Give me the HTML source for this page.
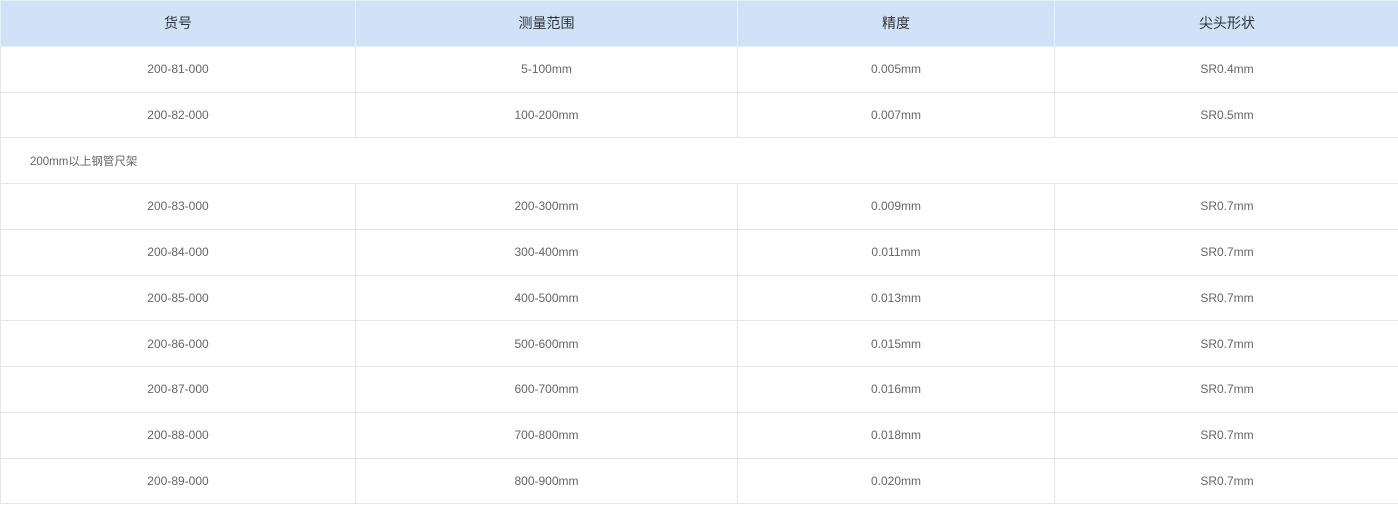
<!DOCTYPE html>
<html><head><meta charset="utf-8"><style>
html,body{margin:0;padding:0;background:#fff;width:1398px;height:505px;overflow:hidden}
table{border-collapse:collapse;table-layout:fixed;width:1399px;font-family:"Liberation Sans","Noto Sans CJK SC",sans-serif;}
td,th{border:1px solid #e6e6e6;text-align:center;height:44.75px;padding:0;font-size:12px;color:#666;font-weight:normal}
th{background:#cfe2f8;font-size:14px;color:#333;border-color:#e9eef5}
td.l{text-align:left;padding-left:29px;font-size:11.5px}
</style></head><body>
<table>
<colgroup><col style="width:355px"><col style="width:382px"><col style="width:317px"><col style="width:345px"></colgroup>
<tr><th>货号</th><th>测量范围</th><th>精度</th><th>尖头形状</th></tr>
<tr><td>200-81-000</td><td>5-100mm</td><td>0.005mm</td><td>SR0.4mm</td></tr>
<tr><td>200-82-000</td><td>100-200mm</td><td>0.007mm</td><td>SR0.5mm</td></tr>
<tr><td colspan="4" class="l">200mm以上钢管尺架</td></tr>
<tr><td>200-83-000</td><td>200-300mm</td><td>0.009mm</td><td>SR0.7mm</td></tr>
<tr><td>200-84-000</td><td>300-400mm</td><td>0.011mm</td><td>SR0.7mm</td></tr>
<tr><td>200-85-000</td><td>400-500mm</td><td>0.013mm</td><td>SR0.7mm</td></tr>
<tr><td>200-86-000</td><td>500-600mm</td><td>0.015mm</td><td>SR0.7mm</td></tr>
<tr><td>200-87-000</td><td>600-700mm</td><td>0.016mm</td><td>SR0.7mm</td></tr>
<tr><td>200-88-000</td><td>700-800mm</td><td>0.018mm</td><td>SR0.7mm</td></tr>
<tr><td>200-89-000</td><td>800-900mm</td><td>0.020mm</td><td>SR0.7mm</td></tr>
</table>
</body></html>
